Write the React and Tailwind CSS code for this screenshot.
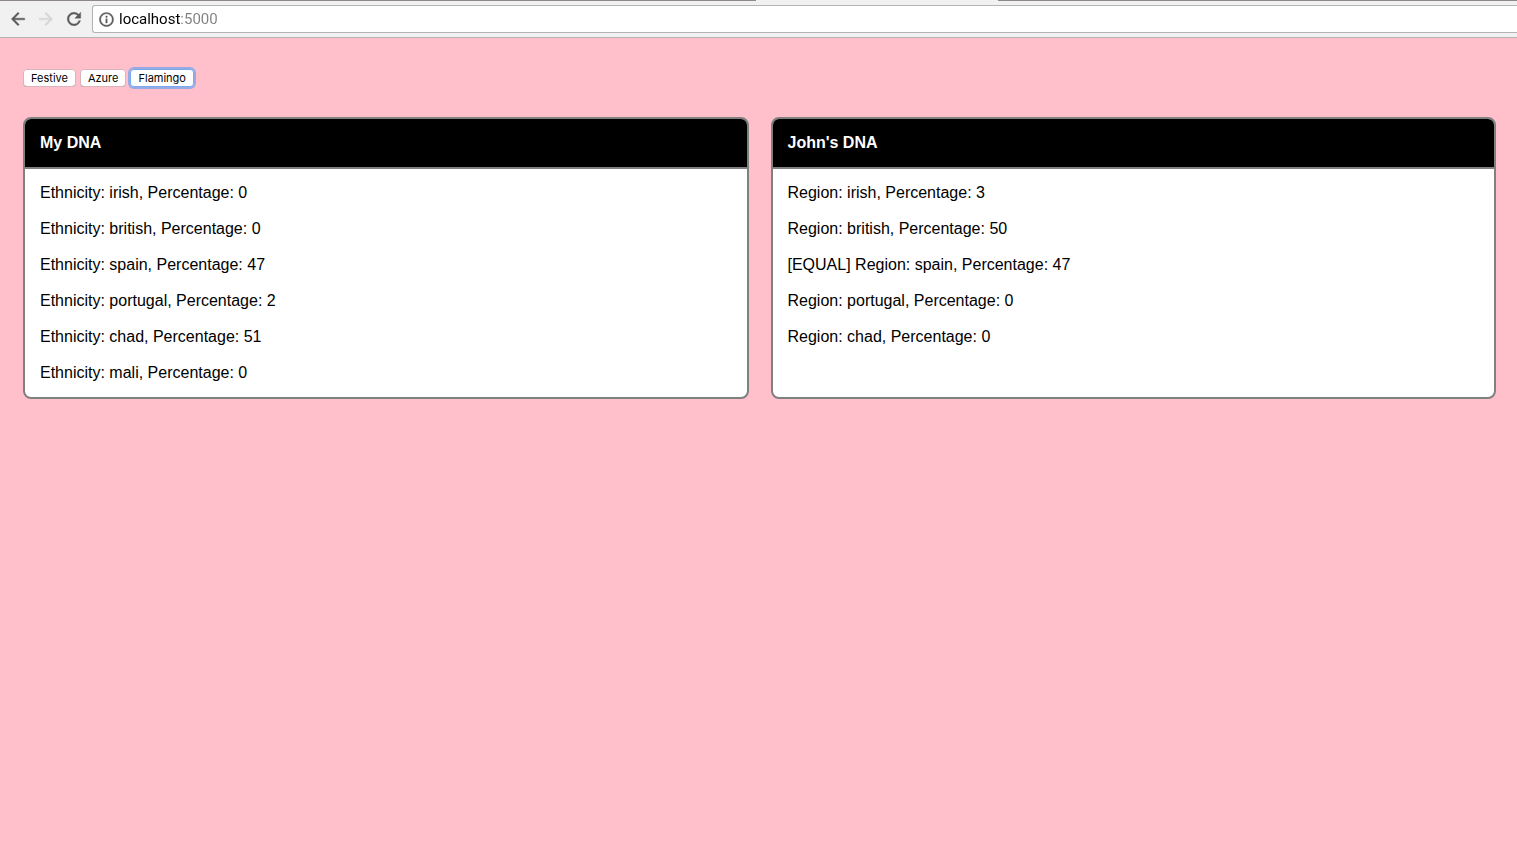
import { useState } from "react";

const themes = [
  { name: "Festive", page: "bg-[#c8e6c9]" },
  { name: "Azure", page: "bg-[#f0ffff]" },
  { name: "Flamingo", page: "bg-[#ffc0cb]" },
];

const mine = [
  ["irish", 0],
  ["british", 0],
  ["spain", 47],
  ["portugal", 2],
  ["chad", 51],
  ["mali", 0],
];

const johns = [
  ["irish", 3],
  ["british", 50],
  ["spain", 47],
  ["portugal", 0],
  ["chad", 0],
];

const paths = {
  back: "M20 11H7.83l5.59-5.59L12 4l-8 8 8 8 1.41-1.41L7.83 13H20v-2z",
  forward: "M12 4l-1.41 1.41L16.17 11H4v2h12.17l-5.58 5.59L12 20l8-8z",
  reload:
    "M17.65 6.35A7.958 7.958 0 0 0 12 4c-4.42 0-7.99 3.58-7.99 8s3.57 8 7.99 8c3.73 0 6.84-2.55 7.73-6h-2.08A5.99 5.99 0 0 1 12 18c-3.31 0-6-2.69-6-6s2.69-6 6-6c1.66 0 3.14.69 4.22 1.78L13 11h7V4l-2.35 2.35z",
  info: "M11 7h2v2h-2zm0 4h2v6h-2zm1-9C6.48 2 2 6.48 2 12s4.48 10 10 10 10-4.48 10-10S17.52 2 12 2zm0 18c-4.41 0-8-3.59-8-8s3.59-8 8-8 8 3.59 8 8-3.59 8-8 8z",
};

function Icon({ name, className }) {
  return (
    <svg
      viewBox="0 0 24 24"
      fill="currentColor"
      stroke="currentColor"
      strokeWidth="0.5"
      aria-hidden="true"
      className={className}
    >
      <path d={paths[name]} />
    </svg>
  );
}

function Toolbar() {
  return (
    <header className="border-b border-[#b5b4b5] bg-[#f2f1f2]">
      <div className="flex h-px">
        <div className="w-[756px] bg-[#8f8889]" />
        <div className="w-[242px]" />
        <div className="flex-1 bg-[#8f8889]" />
      </div>
      <div className="flex h-9 items-center pl-2">
        <button type="button" aria-label="Back" className="mr-2 text-[#5a5a5a]">
          <Icon name="back" className="size-5" />
        </button>
        <button type="button" aria-label="Forward" disabled className="mr-2 text-[#d6d6d6]">
          <Icon name="forward" className="size-5" />
        </button>
        <button type="button" aria-label="Reload" className="mr-2 text-[#5a5a5a]">
          <Icon name="reload" className="size-5" />
        </button>
        <div className="flex h-7 flex-1 items-center gap-1 rounded-l-[3px] border border-r-0 border-[#b5b4b5] bg-white pl-[5px]">
          <Icon name="info" className="size-[17px] text-[#5a5a5a]" />
          <input
            type="text"
            aria-label="Address"
            defaultValue="localhost:5000"
            className="min-w-0 flex-1 bg-[linear-gradient(to_right,#000_61px,#808080_61px)] bg-clip-text font-['Roboto',sans-serif] text-[15px] leading-5 text-transparent outline-none"
          />
        </div>
      </div>
    </header>
  );
}

function Card({ title, children }) {
  return (
    <section className="overflow-hidden rounded-lg border-2 border-[#808080] bg-white">
      <h2 className="border-b-2 border-[#808080] bg-black px-[15px] py-3 font-bold leading-6 text-white">
        {title}
      </h2>
      <div className="px-[15px] py-[6px]">{children}</div>
    </section>
  );
}

export default function App() {
  const [theme, setTheme] = useState("Flamingo");
  const page = themes.find((t) => t.name === theme).page;

  return (
    <div className={`flex min-h-screen flex-col ${page}`}>
      <Toolbar />
      <main className="flex-1 pt-[31px] pr-[21px] pb-8 pl-[23px] font-['Liberation_Sans',Arial,sans-serif] text-base text-black">
        <div className="mb-[30px] flex gap-1">
          {themes.map((t) => (
            <button
              key={t.name}
              type="button"
              aria-pressed={t.name === theme}
              onClick={() => setTheme(t.name)}
              className={`h-[18px] rounded-[4px] bg-white px-2 font-['Inter',sans-serif] text-[11px] leading-[18px] ${
                t.name === theme
                  ? "shadow-[inset_0_0_0_1px_#78aaf0,0_0_0_2px_#98a9e4]"
                  : "shadow-[inset_0_0_0_1px_#d9b4bb,inset_0_-1px_0_0_#b08990]"
              }`}
            >
              {t.name}
            </button>
          ))}
        </div>
        <div className="grid grid-cols-2 gap-[22px]">
          <Card title="My DNA">
            {mine.map(([name, value]) => (
              <p key={name} className="leading-9">{`Ethnicity: ${name}, Percentage: ${value}`}</p>
            ))}
          </Card>
          <Card title="John's DNA">
            {johns.map(([name, value]) => (
              <p key={name} className="leading-9">
                {`${mine.some(([n, v]) => n === name && v === value) ? "[EQUAL] " : ""}Region: ${name}, Percentage: ${value}`}
              </p>
            ))}
          </Card>
        </div>
      </main>
    </div>
  );
}
